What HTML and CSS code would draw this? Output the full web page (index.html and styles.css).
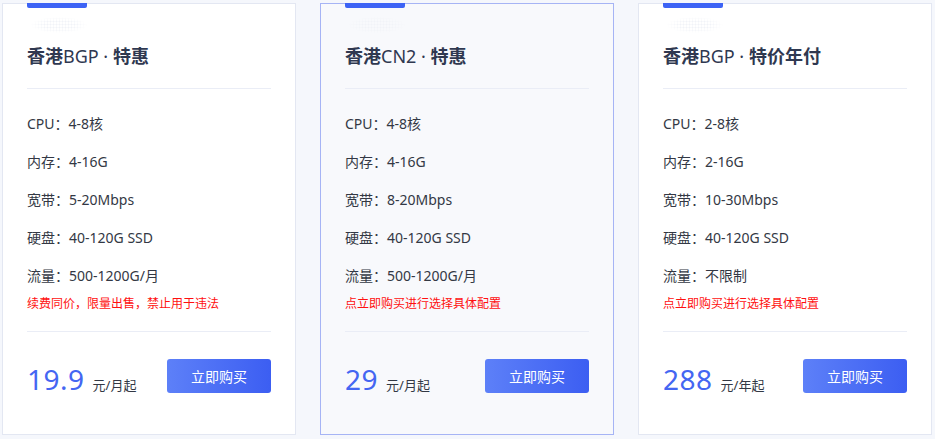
FILE: index.html
```html
<!DOCTYPE html>
<html lang="zh-CN">
<head>
<meta charset="utf-8">
<title>套餐</title>
<link rel="stylesheet" href="styles.css">
</head>
<body>
<div class="plans">
  <div class="card">
    <span class="bar"></span>
    <span class="dots"></span>
    <h3 class="title">香港<span class="lt">BGP · </span>特惠</h3>
    <ul class="specs">
      <li>CPU：4-8核</li>
      <li>内存：4-16G</li>
      <li>宽带：5-20Mbps</li>
      <li>硬盘：40-120G SSD</li>
      <li>流量：500-1200G/月</li>
    </ul>
    <p class="note">续费同价，限量出售，禁止用于违法</p>
    <div class="foot">
      <div class="price"><span class="num">19.9</span><span class="unit">元/月起</span></div>
      <a class="buy">立即购买</a>
    </div>
  </div>
  <div class="card active">
    <span class="bar"></span>
    <span class="dots"></span>
    <h3 class="title">香港<span class="lt">CN2 · </span>特惠</h3>
    <ul class="specs">
      <li>CPU：4-8核</li>
      <li>内存：4-16G</li>
      <li>宽带：8-20Mbps</li>
      <li>硬盘：40-120G SSD</li>
      <li>流量：500-1200G/月</li>
    </ul>
    <p class="note">点立即购买进行选择具体配置</p>
    <div class="foot">
      <div class="price"><span class="num">29</span><span class="unit">元/月起</span></div>
      <a class="buy">立即购买</a>
    </div>
  </div>
  <div class="card">
    <span class="bar"></span>
    <span class="dots"></span>
    <h3 class="title">香港<span class="lt">BGP · </span>特价年付</h3>
    <ul class="specs">
      <li>CPU：2-8核</li>
      <li>内存：2-16G</li>
      <li>宽带：10-30Mbps</li>
      <li>硬盘：40-120G SSD</li>
      <li>流量：不限制</li>
    </ul>
    <p class="note">点立即购买进行选择具体配置</p>
    <div class="foot">
      <div class="price"><span class="num">288</span><span class="unit">元/年起</span></div>
      <a class="buy">立即购买</a>
    </div>
  </div>
</div>
</body>
</html>
```
FILE: styles.css
```css
* { box-sizing: border-box; }
html, body { margin: 0; padding: 0; }
body {
  background: #f5f7fc;
  font-family: "Noto Sans", "Noto Sans CJK SC", sans-serif;
  color: #333844;
  width: 935px;
  height: 439px;
  overflow: hidden;
}
.plans {
  display: flex;
  gap: 24px;
  padding: 3px 0 0 2px;
}
.card {
  position: relative;
  flex: 0 0 294px;
  height: 432px;
  background: #fff;
  border: 1px solid #e3e7f2;
  padding: 0 24px;
}
.card.active {
  background: #f8f9fc;
  border-color: #a6b4f5;
}
.bar {
  position: absolute;
  left: 24px;
  top: -1px;
  width: 60px;
  height: 5px;
  background: #3d63f5;
  border-radius: 0 0 2px 2px;
}
.dots {
  position: absolute;
  left: 28px;
  top: 13px;
  width: 56px;
  height: 16px;
  background-image: radial-gradient(circle, #f1f3f8 0.8px, transparent 1.2px);
  background-size: 3px 3px;
  -webkit-mask-image: radial-gradient(ellipse at center, #000 40%, transparent 72%);
  mask-image: radial-gradient(ellipse at center, #000 40%, transparent 72%);
}
.title {
  margin: 0;
  padding-top: 37px;
  padding-bottom: 17px;
  line-height: 30px;
  font-size: 18px;
  font-weight: 700;
  color: #2f3850;
  border-bottom: 1px solid #eaedf6;
}
.title .lt { font-weight: 400; }
.specs {
  list-style: none;
  margin: 0;
  padding: 16px 0 0;
}
.specs li {
  line-height: 38px;
  font-size: 14px;
}
.note {
  margin: 0;
  line-height: 18px;
  font-size: 12px;
  color: #ff1010;
  padding-bottom: 18px;
  border-bottom: 1px solid #eaedf6;
}
.foot {
  display: flex;
  justify-content: space-between;
  align-items: flex-start;
  padding-top: 27px;
}
.price {
  display: flex;
  align-items: baseline;
  padding-top: 2px;
}
.num {
  font-size: 28px;
  line-height: 36px;
  color: #4466f2;
  letter-spacing: 0.5px;
}
.unit {
  font-size: 13px;
  color: #333844;
  margin-left: 8px;
}
.buy {
  display: flex;
  align-items: center;
  justify-content: center;
  width: 104px;
  height: 34px;
  border-radius: 3px;
  background: linear-gradient(90deg, #5d80f8, #3c5ef2);
  color: #fff;
  font-size: 14px;
  cursor: pointer;
}
```
